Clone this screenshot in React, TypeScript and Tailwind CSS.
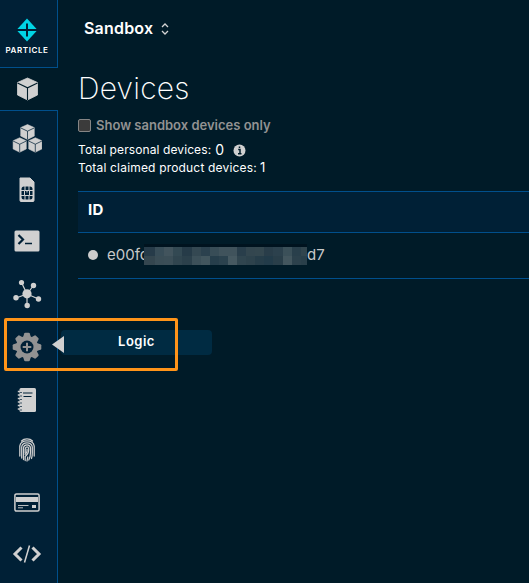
import React from "react";

const light = "#d0d0d0";
const navy = "#002036";

function Cube({ x, y, s, line }: { x: number; y: number; s: number; line: string }) {
  return (
    <g transform={`translate(${x} ${y}) scale(${s})`}>
      <path d="M0-11 L10-6.5 V6 L0 11 L-10 6 V-6.5Z" fill={light} stroke={light} strokeWidth="0.8" strokeLinejoin="round" />
      <path d="M-10-6 L0-1.2 L10-6 M0-1.2 V11" fill="none" stroke={line} strokeWidth="1.1" />
    </g>
  );
}

function Sim() {
  return (
    <svg width="16" height="26" viewBox="0 0 16 26">
      <path d="M1 1H11L15 5V23.5a1 1 0 0 1-1 1H2a1 1 0 0 1-1-1Z" fill={light} stroke={light} />
      <rect x="2.5" y="9.5" width="11" height="13" rx="2.5" fill={navy} />
      <path d="M2 13.5H5.500V18.5H2M14 13.5H10.500V18.5H14M5.500 13.5H10.500M5.500 18.5H10.500M6 9V13.5M10 9V13.5M6 18.5V23M10 18.5V23M8 13.500V15.500" fill="none" stroke={light} strokeWidth="1" />
    </svg>
  );
}

function Terminal() {
  return (
    <svg width="26" height="22" viewBox="0 0 26 22">
      <rect x="0.5" y="0.5" width="25" height="21" rx="1.5" fill={light} />
      <path d="M4.5 5L9 9.5L4.5 14" fill="none" stroke={navy} strokeWidth="2.2" />
      <path d="M11 13.5H18" stroke={navy} strokeWidth="1.5" />
    </svg>
  );
}

function Network() {
  return (
    <svg width="30" height="30" viewBox="0 0 30 30" fill={light} stroke={light}>
      <path d="M15 15L9.500 3.500M15 15L21.500 6.500M15 15L4 19M15 15L26.500 20M15 15V26" strokeWidth="1.2" />
      <circle cx="15" cy="14.800" r="4.600" stroke="none" />
      <circle cx="9.500" cy="3.500" r="2.600" stroke="none" />
      <circle cx="21.500" cy="6.500" r="2.700" stroke="none" />
      <circle cx="4" cy="18.800" r="2.700" stroke="none" />
      <circle cx="26.500" cy="20" r="2.700" stroke="none" />
      <circle cx="15.200" cy="26.500" r="2.700" stroke="none" />
    </svg>
  );
}

function Gear() {
  const teeth = [0, 45, 90, 135, 180, 225, 270, 315];
  return (
    <svg width="30" height="30" viewBox="-15 -15 30 30" fill="#929292">
      {teeth.map((a) => (
        <path key={a} transform={`rotate(${a})`} d="M-4.500-8 L-2.800-13.500 Q-2.500-14.300-1.700-14.300 H1.700 Q2.500-14.300 2.800-13.500 L4.500-8Z" />
      ))}
      <circle r="11" />
      <circle r="6.500" fill={navy} />
      <path d="M-4.300 0H4.300M0-4.300V4.300" stroke="#929292" strokeWidth="2" />
    </svg>
  );
}

function Notebook() {
  return (
    <svg width="20" height="26" viewBox="0 0 20 26">
      <rect x="2.500" y="1" width="16.500" height="24" rx="1.500" fill={light} />
      <path d="M0.800 4.500H4M0.800 8H4M0.800 11.500H4M0.800 15H4M0.800 18.500H4M0.800 22H4" stroke={light} strokeWidth="1.300" />
      <path d="M3 5.500H5M3 9H5M3 12.500H5M3 16H5M3 19.500H5M3 23H5" stroke={navy} strokeWidth="0.700" />
      <path d="M6 6H15.500M6.500 9.500H14.500" stroke={navy} strokeWidth="1.200" />
    </svg>
  );
}

function Fingerprint() {
  return (
    <svg width="16" height="24" viewBox="0 0 16 24" fill="none" stroke={light} strokeWidth="1.250" strokeLinecap="round">
      <path d="M2.500 3Q4.500 0.900 8 0.900T13.500 3" />
      <path d="M0.800 18V8Q1.500 2.900 8 2.900T15.200 8V18" />
      <path d="M2.700 20V9Q3.200 4.900 8 4.900T13.300 9V15Q13.300 18.500 12.500 20.500" />
      <path d="M4.500 21.500V10Q4.800 6.900 8 6.900T11.500 10V14Q11.500 19 9.800 22" />
      <path d="M6.200 22.500V18.500Q9.500 16 9.700 12V10.500Q9.500 8.900 8 8.900T6.200 11V15" />
      <path d="M8 11V13Q7.800 15 6.200 16.300M8 23L8.800 19" />
    </svg>
  );
}

function Card() {
  return (
    <svg width="26" height="20" viewBox="0 0 26 20">
      <rect x="0.900" y="0.900" width="24.200" height="17.200" rx="1.500" fill={navy} stroke={light} strokeWidth="1.500" />
      <path d="M2 4H24V9H2Z" fill={light} />
      <path d="M4 12.500H14.500M4 14.800H9" stroke={light} strokeWidth="0.900" />
      <rect x="18" y="12" width="4" height="3" fill={light} />
    </svg>
  );
}

function Code() {
  return (
    <svg width="30" height="20" viewBox="0 0 30 20" fill="none" stroke={light}>
      <path d="M9.500 3.500L3 10L9.500 16.500M20.500 3.500L27 10L20.500 16.500" strokeWidth="3" />
      <path d="M17.500 1.500L12.500 18.500" strokeWidth="1.500" />
    </svg>
  );
}

const cellWidths = [11, 9, 9, 9, 10, 9, 9, 9, 9, 9, 9, 9, 9, 9, 10, 9, 9, 6];
const topRow = ["#263b49", "#384d58", "#42545d", "#334953", "#263b48", "#344852", "#2b414e", "#384d57", "#40535c", "#40535c", "#293e4b", "#33464f", "#34474f", "#293d49", "#2c414d", "#3b5059", "#293f4b", "#31454e"];
const bottomRow = ["#34464f", "#3a4d56", "#3b4e57", "#30454f", "#2b404b", "#3c5059", "#42565e", "#263e4b", "#2b424e", "#465961", "#30454f", "#2d424c", "#263d49", "#223b49", "#293e49", "#43565e", "#2c414c", "#293f4a"];

function Mosaic() {
  return (
    <span className="z-10 mb-[3px] block w-[163px] shrink-0 border-t-[3px] border-[#00131f]">
      {[topRow, bottomRow].map((row, r) => (
        <span key={r} className="flex h-[9px]">
          {row.map((c, i) => (
            <span key={i} className="h-full shrink-0" style={{ width: cellWidths[i], backgroundColor: c }} />
          ))}
        </span>
      ))}
    </span>
  );
}

function Sidebar() {
  return (
    <aside className="flex h-full w-[58px] shrink-0 flex-col bg-[#002036]">
      <div className="flex h-[68px] flex-col items-center border-r border-b border-[#004f8c] pt-[18px] pr-[3px]">
        <svg width="22" height="24" viewBox="0 0 22 24">
          <path d="M11 0.500L21.500 12L11 23.500L0.500 12Z" fill="#00d5e6" />
          <path d="M0 12H22M11 5.500V18.500" stroke={navy} strokeWidth="2" />
        </svg>
        <span className="mt-[3px] text-[8px] leading-[10px] font-semibold tracking-[0.600px] text-white">PARTICLE</span>
      </div>
      <div className="flex h-[43px] items-center justify-center border-b border-[#004f8c] bg-[#001b28] pr-[4px]">
        <svg width="24" height="26" viewBox="-12 -13 24 26"><Cube x={0.5} y={0} s={1} line="#001b28" /></svg>
      </div>
      <nav className="flex flex-1 flex-col border-r border-[#004f8c] pr-[3px]">
        <div className="flex h-14 items-center justify-center">
          <svg width="30" height="30" viewBox="0 0 30 30">
            <Cube x={15.5} y={8} s={0.68} line={navy} />
            <Cube x={7.7} y={21} s={0.66} line={navy} />
            <Cube x={23.3} y={21} s={0.66} line={navy} />
          </svg>
        </div>
        <div className="flex h-[46px] items-center justify-center"><Sim /></div>
        <div className="flex h-14 items-center justify-center"><Terminal /></div>
        <div className="flex h-[50px] items-center justify-center"><Network /></div>
        <div className="flex h-[54px] items-center justify-center pt-px"><Gear /></div>
        <div className="flex h-[54px] items-center justify-center"><Notebook /></div>
        <div className="flex h-[46px] items-center justify-center"><Fingerprint /></div>
        <div className="flex h-[58px] items-center justify-center pt-[2px]"><Card /></div>
        <div className="flex h-11 items-center justify-center pt-px"><Code /></div>
      </nav>
    </aside>
  );
}

export default function App() {
  return (
    <div className="relative flex h-[583px] w-[529px] overflow-hidden bg-[#001b28] font-['Inter',sans-serif] text-white">
      <Sidebar />
      <main className="flex min-w-0 flex-1 flex-col pl-5 whitespace-nowrap">
        <header className="flex h-14 items-center pl-[6px]">
          <span className="text-[16px] font-semibold tracking-[0.2px]">Sandbox</span>
          <svg className="mt-[2px] ml-[8px]" width="8" height="12" viewBox="0 0 8 12" fill="none" stroke="#d4d4d4" strokeWidth="1.300"><path d="M1 4L4 1L7 4M1 8L4 11L7 8" /></svg>
        </header>
        <h1 className="mt-[14px] h-9 text-[30px] leading-9 font-extralight tracking-[0.2px]">Devices</h1>
        <label className="mt-[11px] flex h-[17px] items-center text-[13px] font-semibold text-[#929292]">
          <span className="mr-[5px] size-[13px] rounded-[2px] border border-[#858585] bg-[#3b3b3b]" />
          Show sandbox devices only
        </label>
        <div className="mt-[7px] flex h-[18px] items-center text-[12px]">
          <span className="tracking-[0.1px]">Total personal devices:</span>
          <span className="ml-[4px] text-[14px] leading-[18px]">0</span>
          <svg className="ml-[9px]" width="13" height="13" viewBox="0 0 13 13"><circle cx="6.500" cy="6.500" r="6" fill={light} /><path d="M5.200 5.500H7V9.500M5 9.700H8.500M6.500 2.500V4" fill="none" stroke="#001b28" strokeWidth="1.500" /></svg>
        </div>
        <div className="flex h-[18px] items-center text-[12px]">
          <span className="tracking-[0.18px]">Total claimed product devices:</span>
          <span className="ml-[3px] text-[13px]">1</span>
        </div>
        <section className="mt-[14px]">
          <div className="flex h-[42px] items-center border-y border-[#004f8c] bg-[#002036] pb-[3px] pl-[10px] text-[15px] font-bold tracking-[0.4px]">ID</div>
          <div className="flex h-[46px] items-center border-b border-[#004f8c] pl-[10px] text-[15px] text-[#c8c8c8]">
            <span className="mr-[9px] mb-[2px] size-[10px] rounded-full bg-[#cccccc]" />
            <span className="w-[37px]">e00fc</span>
            <Mosaic />
            <span>d7</span>
          </div>
        </section>
      </main>
      <div className="absolute top-[330px] left-[61px] flex h-[25px] w-[151px] items-center justify-center rounded bg-[#002b42] pb-[2px] text-[13px] font-semibold tracking-[0.500px]">Logic</div>
      <svg className="absolute top-[336px] left-[52px]" width="12" height="17" viewBox="0 0 12 17"><path d="M0 8.500L12 0V17Z" fill={light} /></svg>
      <div className="absolute top-[318px] left-1 h-[53px] w-[174px] rounded-[2px] border-[3px] border-[#ff9419]" />
    </div>
  );
}
